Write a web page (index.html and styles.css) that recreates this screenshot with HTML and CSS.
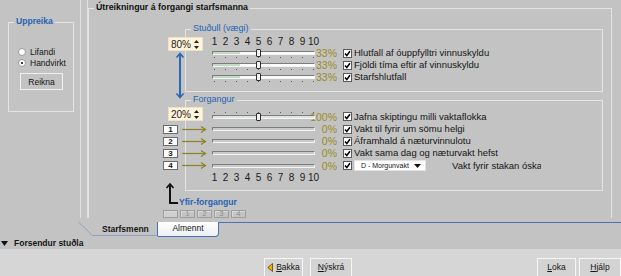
FILE: index.html
```html
<!DOCTYPE html>
<html lang="is">
<head>
    <meta charset="UTF-8">
    <meta name="viewport" content="width=device-width, initial-scale=1.0">
    <title>Forgangur starfsmanna</title>
    <link rel="stylesheet" href="styles.css">
</head>
<body>
    <div class="top">
        <div class="side">
            <div class="group side-group">
                <span class="group-title blue-bold">Uppreika</span>
                <div class="radios">
                    <label class="radio"><span class="dot"></span>Lifandi</label>
                    <label class="radio"><span class="dot on"></span>Handvirkt</label>
                </div>
                <button class="btn reikna" type="button">Reikna</button>
            </div>
        </div>

        <div class="work">
            <div class="scroll">
                <div class="group main-group">
                    <span class="group-title bold">Útreikningur á forgangi starfsmanna</span>

                    <!-- link between the two spinners -->
                    <svg class="link-arrow" width="10" height="47" viewBox="0 0 10 47">
                        <line x1="5" y1="2" x2="5" y2="44" stroke="#2a68b2" stroke-width="2"/>
                        <polyline points="1.5,5.5 5,1.5 8.5,5.5" fill="none" stroke="#2a68b2" stroke-width="1.6"/>
                        <polyline points="1.5,41.5 5,45.5 8.5,41.5" fill="none" stroke="#2a68b2" stroke-width="1.6"/>
                    </svg>

                    <svg class="yfir-arrow" width="16" height="24" viewBox="0 0 16 24">
                        <polyline points="5,3 5,21 13,21" fill="none" stroke="#111" stroke-width="2"/>
                        <polyline points="1.5,6 5,2 8.5,6" fill="none" stroke="#111" stroke-width="1.6"/>
                    </svg>

                    <div class="group sub weights">
                        <span class="group-title blue">Stuðull (vægi)</span>
                        <div class="grid grid-weights">
                            <div class="spin spin-top">80%<svg width="5" height="11" viewBox="0 0 5 11"><polygon points="0,4 2.5,1 5,4" fill="#222"/><polygon points="0,7 2.5,10 5,7" fill="#222"/></svg></div>
                            <div class="scale c-scale"><span>1</span><span>2</span><span>3</span><span>4</span><span>5</span><span>6</span><span>7</span><span>8</span><span>9</span><span>10</span></div>

                            <div class="track white ticks-below c-track"><span class="fill"></span><span class="handle"></span></div>
                            <div class="pct c-pct">33%</div>
                            <span class="chk c-chk"><svg width="7" height="7" viewBox="0 0 7 7"><path d="M1 3.5 L2.8 5.5 L6 1.2" fill="none" stroke="#000" stroke-width="1.5"/></svg></span>
                            <div class="label c-label">Hlutfall af óuppfylltri vinnuskyldu</div>

                            <div class="track white ticks-below c-track"><span class="fill"></span><span class="handle"></span></div>
                            <div class="pct c-pct">33%</div>
                            <span class="chk c-chk"><svg width="7" height="7" viewBox="0 0 7 7"><path d="M1 3.5 L2.8 5.5 L6 1.2" fill="none" stroke="#000" stroke-width="1.5"/></svg></span>
                            <div class="label c-label">Fjöldi tíma eftir af vinnuskyldu</div>

                            <div class="track white ticks-below c-track"><span class="fill"></span><span class="handle"></span></div>
                            <div class="pct c-pct">33%</div>
                            <span class="chk c-chk"><svg width="7" height="7" viewBox="0 0 7 7"><path d="M1 3.5 L2.8 5.5 L6 1.2" fill="none" stroke="#000" stroke-width="1.5"/></svg></span>
                            <div class="label c-label">Starfshlutfall</div>
                        </div>
                    </div>

                    <div class="group sub priority">
                        <span class="group-title blue">Forgangur</span>
                        <div class="grid grid-priority">
                            <div class="spin spin-low c-lead">20%<svg width="5" height="11" viewBox="0 0 5 11"><polygon points="0,4 2.5,1 5,4" fill="#222"/><polygon points="0,7 2.5,10 5,7" fill="#222"/></svg></div>
                            <div class="track pale ticks-above c-track"><span class="handle"></span></div>
                            <div class="pct c-pct"><span>100%</span></div>
                            <span class="chk c-chk"><svg width="7" height="7" viewBox="0 0 7 7"><path d="M1 3.5 L2.8 5.5 L6 1.2" fill="none" stroke="#000" stroke-width="1.5"/></svg></span>
                            <div class="label c-label">Jafna skiptingu milli vaktaflokka</div>

                            <div class="lead c-lead"><span class="nbox">1</span><svg class="olive-arrow" width="25" height="7" viewBox="0 0 25 7"><line x1="0" y1="3.5" x2="23.5" y2="3.5" stroke="#8c8420" stroke-width="1.2"/><polyline points="19,0.5 23.5,3.5 19,6.5" fill="none" stroke="#8c8420" stroke-width="1.2"/></svg></div>
                            <div class="track c-track"></div>
                            <div class="pct c-pct">0%</div>
                            <span class="chk c-chk"><svg width="7" height="7" viewBox="0 0 7 7"><path d="M1 3.5 L2.8 5.5 L6 1.2" fill="none" stroke="#000" stroke-width="1.5"/></svg></span>
                            <div class="label c-label">Vakt til fyrir um sömu helgi</div>

                            <div class="lead c-lead"><span class="nbox">2</span><svg class="olive-arrow" width="25" height="7" viewBox="0 0 25 7"><line x1="0" y1="3.5" x2="23.5" y2="3.5" stroke="#8c8420" stroke-width="1.2"/><polyline points="19,0.5 23.5,3.5 19,6.5" fill="none" stroke="#8c8420" stroke-width="1.2"/></svg></div>
                            <div class="track c-track"></div>
                            <div class="pct c-pct">0%</div>
                            <span class="chk c-chk"><svg width="7" height="7" viewBox="0 0 7 7"><path d="M1 3.5 L2.8 5.5 L6 1.2" fill="none" stroke="#000" stroke-width="1.5"/></svg></span>
                            <div class="label c-label">Áframhald á næturvinnulotu</div>

                            <div class="lead c-lead"><span class="nbox">3</span><svg class="olive-arrow" width="25" height="7" viewBox="0 0 25 7"><line x1="0" y1="3.5" x2="23.5" y2="3.5" stroke="#8c8420" stroke-width="1.2"/><polyline points="19,0.5 23.5,3.5 19,6.5" fill="none" stroke="#8c8420" stroke-width="1.2"/></svg></div>
                            <div class="track c-track"></div>
                            <div class="pct c-pct">0%</div>
                            <span class="chk c-chk"><svg width="7" height="7" viewBox="0 0 7 7"><path d="M1 3.5 L2.8 5.5 L6 1.2" fill="none" stroke="#000" stroke-width="1.5"/></svg></span>
                            <div class="label c-label">Vakt sama dag og næturvakt hefst</div>

                            <div class="lead c-lead"><span class="nbox">4</span><svg class="olive-arrow" width="25" height="7" viewBox="0 0 25 7"><line x1="0" y1="3.5" x2="23.5" y2="3.5" stroke="#8c8420" stroke-width="1.2"/><polyline points="19,0.5 23.5,3.5 19,6.5" fill="none" stroke="#8c8420" stroke-width="1.2"/></svg></div>
                            <div class="track c-track"></div>
                            <div class="pct c-pct">0%</div>
                            <span class="chk c-chk"><svg width="7" height="7" viewBox="0 0 7 7"><path d="M1 3.5 L2.8 5.5 L6 1.2" fill="none" stroke="#000" stroke-width="1.5"/></svg></span>
                            <div class="label c-label label-row">
                                <div class="select"><span>D - Morgunvakt</span><svg width="7" height="4" viewBox="0 0 7 4"><polygon points="0,0 7,0 3.5,4" fill="#111"/></svg></div>
                                <span class="clip">Vakt fyrir stakan óska</span>
                            </div>

                            <div class="scale c-scale"><span>1</span><span>2</span><span>3</span><span>4</span><span>5</span><span>6</span><span>7</span><span>8</span><span>9</span><span>10</span></div>
                        </div>
                    </div>

                    <div class="yfir-title blue-bold">Yfir-forgangur</div>
                    <div class="yfir-boxes">
                        <span class="dbox empty"></span>
                        <span class="dbox">1</span>
                        <span class="dbox">2</span>
                        <span class="dbox">3</span>
                        <span class="dbox">4</span>
                    </div>
                </div>
            </div>
        </div>
    </div>

    <div class="tabs">
        <div class="tab-gap"></div>
        <div class="tab tab-off">
            <svg class="tab-edge" width="79" height="15" viewBox="0 0 79 15"><polyline points="0.5,0 14.5,13.5 79,13.5" fill="none" stroke="#8fa2c0" stroke-width="1"/></svg>
            <span>Starfsmenn</span>
        </div>
        <div class="tab tab-on">Almennt</div>
        <div class="tab-rest"></div>
    </div>

    <div class="forsendur">
        <svg width="7" height="5" viewBox="0 0 7 5"><polygon points="0,0 7,0 3.5,5" fill="#111"/></svg>
        <span>Forsendur stuðla</span>
    </div>

    <div class="footer">
        <div class="btn-group">
            <button class="btn foot-btn" type="button"><svg width="6" height="9" viewBox="0 0 6 9"><polygon points="5.5,0.5 0.8,4.5 5.5,8.5" fill="#f0b400" stroke="#5a4200" stroke-width="0.8"/></svg><span><u>B</u>akka</span></button>
            <button class="btn foot-btn" type="button"><span><u>N</u>ýskrá</span></button>
        </div>
        <div class="btn-group right">
            <button class="btn foot-btn" type="button"><span><u>L</u>oka</span></button>
            <button class="btn foot-btn" type="button"><span><u>H</u>jálp</span></button>
        </div>
    </div>
</body>
</html>
```

FILE: styles.css
```css
body {
    margin: 0;
    width: 621px;
    height: 276px;
    overflow: hidden;
    background: #c3c3c3;
    font-family: "Liberation Sans", Arial, sans-serif;
    font-size: 9px;
    color: #151515;
}

/* ---- top area ---- */
.top {
    display: flex;
    height: 218px;
}
.side {
    width: 80px;
    flex: none;
}
.work {
    flex: 1;
    border-left: 1px solid #e2e2e2;
    padding-left: 6px;
}
.scroll {
    height: 218px;
    overflow: hidden;
    border-left: 1px solid #e2e2e2;
}

/* ---- group boxes ---- */
.group {
    position: relative;
    box-sizing: border-box;
    border: 1px solid #e4e4e4;
}
.group-title {
    position: absolute;
    top: -7px;
    left: 5px;
    padding: 0 2px;
    line-height: 11px;
    background: #c3c3c3;
    white-space: nowrap;
}
.bold { font-weight: bold; font-size: 8.8px; color: #111; }
.blue { color: #2464b4; font-size: 9px; }
.blue-bold { color: #2464b4; font-weight: bold; font-size: 8.6px; }

.side-group {
    margin: 22px 0 0 8px;
    width: 66px;
    height: 90px;
}
.radios {
    margin-top: 23px;
    padding-left: 9px;
}
.radio {
    display: flex;
    align-items: center;
    height: 11px;
    font-size: 8.5px;
}
.dot {
    width: 8px;
    height: 8px;
    box-sizing: border-box;
    border: 1px solid #9a9a9a;
    border-radius: 50%;
    background: #fff;
    margin-right: 4px;
    position: relative;
}
.dot.on::after {
    content: "";
    position: absolute;
    left: 2px;
    top: 2px;
    width: 2px;
    height: 2px;
    border-radius: 50%;
    background: #000;
}
.btn {
    font-family: inherit;
    font-size: 8.5px;
    color: #151515;
    background: #c3c3c3;
    border: 1px solid #f0f0f0;
    padding: 0;
}
.reikna {
    display: block;
    margin: 5px 0 0 11px;
    width: 43px;
    height: 17px;
}

.main-group {
    margin-top: 8px;
    width: 524px;
    height: 260px;
    padding-top: 20px;
}
.link-arrow {
    position: absolute;
    left: 86px;
    top: 43px;
}
.yfir-arrow {
    position: absolute;
    left: 76px;
    top: 173px;
}

.sub {
    margin-left: 96px;
    width: 418px;
}
.weights {
    padding: 7px 0 8px;
}
.priority {
    margin-top: 8px;
    padding: 9px 0 6px;
}

/* ---- slider grid ---- */
.grid {
    display: grid;
    grid-template-columns: 49px 103px 28px 11px 1fr;
    align-items: center;
    margin-left: -23px;
}
.grid-weights { grid-template-rows: 10px 12px 12px 12px; }
.grid-priority { grid-template-rows: 13px 12px 12px 12px 13px 12px; }

.c-lead { grid-column: 1; }
.c-track { grid-column: 2; }
.c-pct { grid-column: 3; }
.c-chk { grid-column: 4; }
.c-label { grid-column: 5; }
.c-scale { grid-column: 2 / span 2; }

.spin {
    box-sizing: border-box;
    width: 35px;
    height: 14px;
    margin-left: 5px;
    padding: 0 3px 0 2px;
    display: flex;
    align-items: center;
    justify-content: space-between;
    background: #fff3da;
    border: 1px solid #ece2cc;
    font-size: 10px;
    color: #222;
}
.spin-top {
    grid-column: 1;
    grid-row: 1 / span 2;
    align-self: start;
}
.spin-low {
    align-self: start;
    margin-top: -3px;
}

.scale {
    display: flex;
    margin-left: -3px;
    font-size: 10px;
    color: #1a1a1a;
    line-height: 10px;
}
.scale span {
    width: 11px;
    text-align: center;
}

.track {
    position: relative;
    z-index: 1;
    height: 2px;
    border: 1px solid;
    border-color: #7c7c7c #f4f4f4 #f4f4f4 #7c7c7c;
    background: #c9c9c9;
}
.track.white { background: #fbfbfb; }
.track.pale { background: #dde6dc; }
.fill {
    position: absolute;
    left: 0;
    top: 0;
    bottom: 0;
    width: 27px;
    background: #c5dac4;
}
.handle {
    position: absolute;
    left: 43px;
    top: -3px;
    width: 5px;
    height: 8px;
    box-sizing: border-box;
    border: 1px solid #2c2c2c;
    border-radius: 1px;
    background: #f2f2f2;
}
.ticks-below::after,
.ticks-above::after {
    content: "";
    position: absolute;
    left: 1px;
    width: 100px;
    height: 1px;
    background: repeating-linear-gradient(to right, #5a5a5a 0 1px, transparent 1px 11px);
}
.ticks-below::after { top: 5px; }
.ticks-above::after { top: -4px; }

.pct {
    display: flex;
    justify-content: flex-end;
    padding-right: 6px;
    font-size: 10.5px;
    color: #9a8c22;
    white-space: nowrap;
    line-height: 12px;
}
.chk {
    width: 9px;
    height: 9px;
    box-sizing: border-box;
    border: 1px solid #5a5a5a;
    background: #fff;
    display: flex;
    align-items: center;
    justify-content: center;
}
.label {
    font-size: 9.5px;
    white-space: nowrap;
    line-height: 12px;
}
.label-row {
    display: flex;
    align-items: center;
}
.select {
    box-sizing: border-box;
    width: 72px;
    height: 11px;
    padding: 0 4px 0 6px;
    display: flex;
    align-items: center;
    justify-content: space-between;
    background: #fff;
    border: 1px solid #e2e2e2;
    font-size: 7px;
}
.clip {
    margin-left: 26px;
    width: 89px;
    overflow: hidden;
}

.lead {
    display: flex;
    align-items: center;
}
.nbox {
    box-sizing: border-box;
    width: 15px;
    height: 9px;
    border: 1px solid #6c6c6c;
    background: #fff;
    font-size: 8px;
    font-weight: bold;
    line-height: 7px;
    text-align: center;
}
.olive-arrow {
    margin-left: 4px;
}

.yfir-title {
    margin: 6px 0 0 90px;
    line-height: 10px;
}
.yfir-boxes {
    display: flex;
    gap: 2px;
    margin: 3px 0 0 74px;
}
.dbox {
    box-sizing: border-box;
    width: 15px;
    height: 8px;
    border: 1px solid #9c9c9c;
    box-shadow: inset 1px 1px 0 #dadada;
    font-size: 7px;
    line-height: 6px;
    text-align: center;
    color: #8c8c8c;
}
.dbox.empty { background: #d0d0d0; }

/* ---- tabs ---- */
.tabs {
    display: flex;
    height: 15px;
    margin-top: 4px;
}
.tab-gap { width: 78px; }
.tab {
    box-sizing: border-box;
    height: 15px;
}
.tab-off {
    position: relative;
    width: 79px;
    padding-left: 24px;
    font-weight: bold;
    font-size: 8.5px;
    line-height: 14px;
}
.tab-edge {
    position: absolute;
    left: 0;
    top: 0;
}
.tab-off span {
    position: relative;
}
.tab-on {
    width: 62px;
    border: 1px solid #4c72b4;
    border-top: none;
    border-radius: 0 0 4px 2px;
    background: linear-gradient(#ffffff, #eceff5);
    text-align: center;
    line-height: 12px;
    font-size: 8.5px;
}
.tab-rest {
    flex: 1;
    border-top: 1px solid #4c72b4;
}

.forsendur {
    display: flex;
    align-items: center;
    gap: 6px;
    height: 12px;
    padding-left: 1px;
    font-weight: bold;
    font-size: 8.5px;
}

/* ---- footer ---- */
.footer {
    display: flex;
    height: 27px;
    box-sizing: border-box;
    padding: 9px 0 0 264px;
    background: #d6d6d6;
}
.btn-group {
    display: flex;
    gap: 7px;
}
.btn-group.right {
    margin-left: auto;
    gap: 3px;
}
.foot-btn {
    height: 21px;
    width: 42px;
    background: #d3d3d3;
    border: 1px solid #f6f6f6;
    display: flex;
    align-items: center;
    justify-content: center;
    gap: 3px;
    padding-bottom: 3px;
}
.foot-btn:first-child { width: 39px; }
```
